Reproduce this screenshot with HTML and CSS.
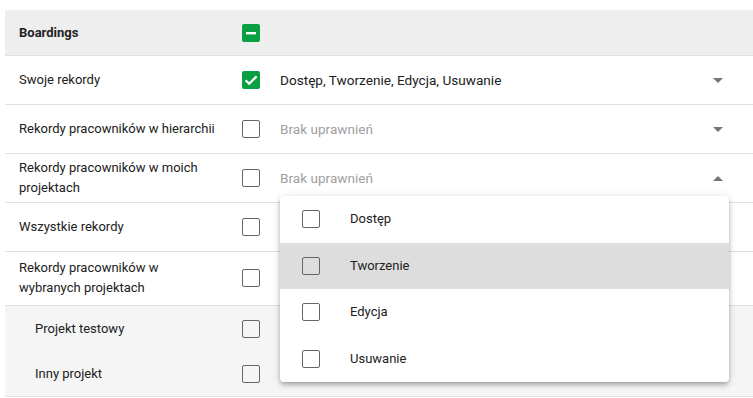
FILE: index.html
```
<!DOCTYPE html>
<html lang="pl">
  <head>
    <meta charset="UTF-8" />
    <meta name="viewport" content="width=device-width, initial-scale=1.0" />
    <title>Uprawnienia</title>
    <link rel="stylesheet" href="styles.css">
  </head>
  <body>
    <div class="perm-table">
      <div class="perm-row perm-head">
        <div class="perm-label">Boardings</div>
        <div class="perm-check">
          <span class="cb cb-on">
            <svg viewBox="0 0 18 18" width="18" height="18"><rect x="4" y="8" width="10" height="2.4" fill="#fff" /></svg>
          </span>
        </div>
      </div>

      <div class="perm-row">
        <div class="perm-label">Swoje rekordy</div>
        <div class="perm-check">
          <span class="cb cb-on">
            <svg viewBox="0 0 18 18" width="18" height="18"><path d="M3.6 9.3 L7.2 12.8 L14.6 5.4" fill="none" stroke="#fff" stroke-width="2.2" /></svg>
          </span>
        </div>
        <div class="perm-value">Dostęp, Tworzenie, Edycja, Usuwanie</div>
        <span class="arrow"></span>
      </div>

      <div class="perm-row">
        <div class="perm-label">Rekordy pracowników w hierarchii</div>
        <div class="perm-check"><span class="cb"></span></div>
        <div class="perm-value empty">Brak uprawnień</div>
        <span class="arrow"></span>
      </div>

      <div class="perm-row">
        <div class="perm-label">Rekordy pracowników w moich projektach</div>
        <div class="perm-check"><span class="cb"></span></div>
        <div class="perm-value empty open">
          Brak uprawnień
          <!-- open select panel -->
          <div class="select-panel">
            <div class="select-option"><span class="cb"></span><span>Dostęp</span></div>
            <div class="select-option active"><span class="cb"></span><span>Tworzenie</span></div>
            <div class="select-option"><span class="cb"></span><span>Edycja</span></div>
            <div class="select-option"><span class="cb"></span><span>Usuwanie</span></div>
          </div>
        </div>
        <span class="arrow up"></span>
      </div>

      <!-- values of the rows below sit under the open panel -->
      <div class="perm-row">
        <div class="perm-label">Wszystkie rekordy</div>
        <div class="perm-check"><span class="cb"></span></div>
        <div class="perm-value empty"></div>
        <span class="arrow"></span>
      </div>

      <div class="perm-row perm-group">
        <div class="perm-label">Rekordy pracowników w wybranych projektach</div>
        <div class="perm-check"><span class="cb"></span></div>
        <div class="perm-value empty"></div>
        <span class="arrow"></span>
      </div>

      <div class="perm-row perm-sub">
        <div class="perm-label">Projekt testowy</div>
        <div class="perm-check"><span class="cb"></span></div>
        <div class="perm-value empty"></div>
        <span class="arrow"></span>
      </div>

      <div class="perm-row perm-sub last">
        <div class="perm-label">Inny projekt</div>
        <div class="perm-check"><span class="cb"></span></div>
        <div class="perm-value empty"></div>
        <span class="arrow"></span>
      </div>
    </div>
  </body>
</html>
```

FILE: styles.css
```
body {
  margin: 0;
  padding: 10px 0 0 5px;
  font-family: Roboto, "Liberation Sans", sans-serif;
  font-size: 13px;
  color: #212121;
  background: #fff;
}

.perm-table {
  display: flex;
  flex-direction: column;
}

.perm-row {
  display: flex;
  align-items: center;
  min-height: 49px;
  padding: 4px 0;
  box-sizing: border-box;
  border-bottom: 1px solid #e0e0e0;
  line-height: 20px;
}

.perm-head {
  background: #eeeeee;
  min-height: 46px;
  padding: 0;
  font-weight: bold;
}

.perm-group {
  padding: 6px 0 7px;
}

.perm-sub {
  background: #f5f5f5;
  border-bottom: none;
  min-height: 45px;
  padding: 0;
}

.perm-sub.last {
  min-height: 46px;
  border-bottom: 1px solid #e0e0e0;
}

.perm-label {
  width: 203px;
  padding-left: 14px;
  flex-shrink: 0;
}

.perm-sub .perm-label {
  width: 187px;
  padding-left: 30px;
}

.perm-check {
  margin-left: 20px;
  width: 18px;
  height: 18px;
  flex-shrink: 0;
}

.cb {
  display: block;
  width: 18px;
  height: 18px;
  box-sizing: border-box;
  border: 1.5px solid #666;
  border-radius: 2px;
  flex-shrink: 0;
}

.cb svg {
  display: block;
}

.cb-on {
  border: none;
  background: #0a9f42;
}

.perm-value {
  flex: 1;
  margin-left: 20px;
  position: relative;
  font-size: 13.6px;
}

.perm-value.empty {
  color: #a0a0a0;
}

.arrow {
  width: 0;
  height: 0;
  border-left: 5px solid transparent;
  border-right: 5px solid transparent;
  border-top: 5px solid #757575;
  margin-right: 30px;
}

.arrow.up {
  border-top: none;
  border-bottom: 5px solid #757575;
}

.select-panel {
  position: absolute;
  left: 0;
  top: 28px;
  width: 449px;
  background: #fff;
  border-radius: 4px;
  color: #212121;
  font-size: 13px;
  box-shadow: 0 2px 4px -1px rgba(0, 0, 0, 0.2), 0 4px 5px 0 rgba(0, 0, 0, 0.14),
    0 1px 10px 0 rgba(0, 0, 0, 0.12);
  z-index: 5;
  overflow: hidden;
}

.select-option {
  display: flex;
  align-items: center;
  gap: 30px;
  height: 46.5px;
  padding-left: 22px;
}

.select-option.active {
  background: #dddddd;
}
```
